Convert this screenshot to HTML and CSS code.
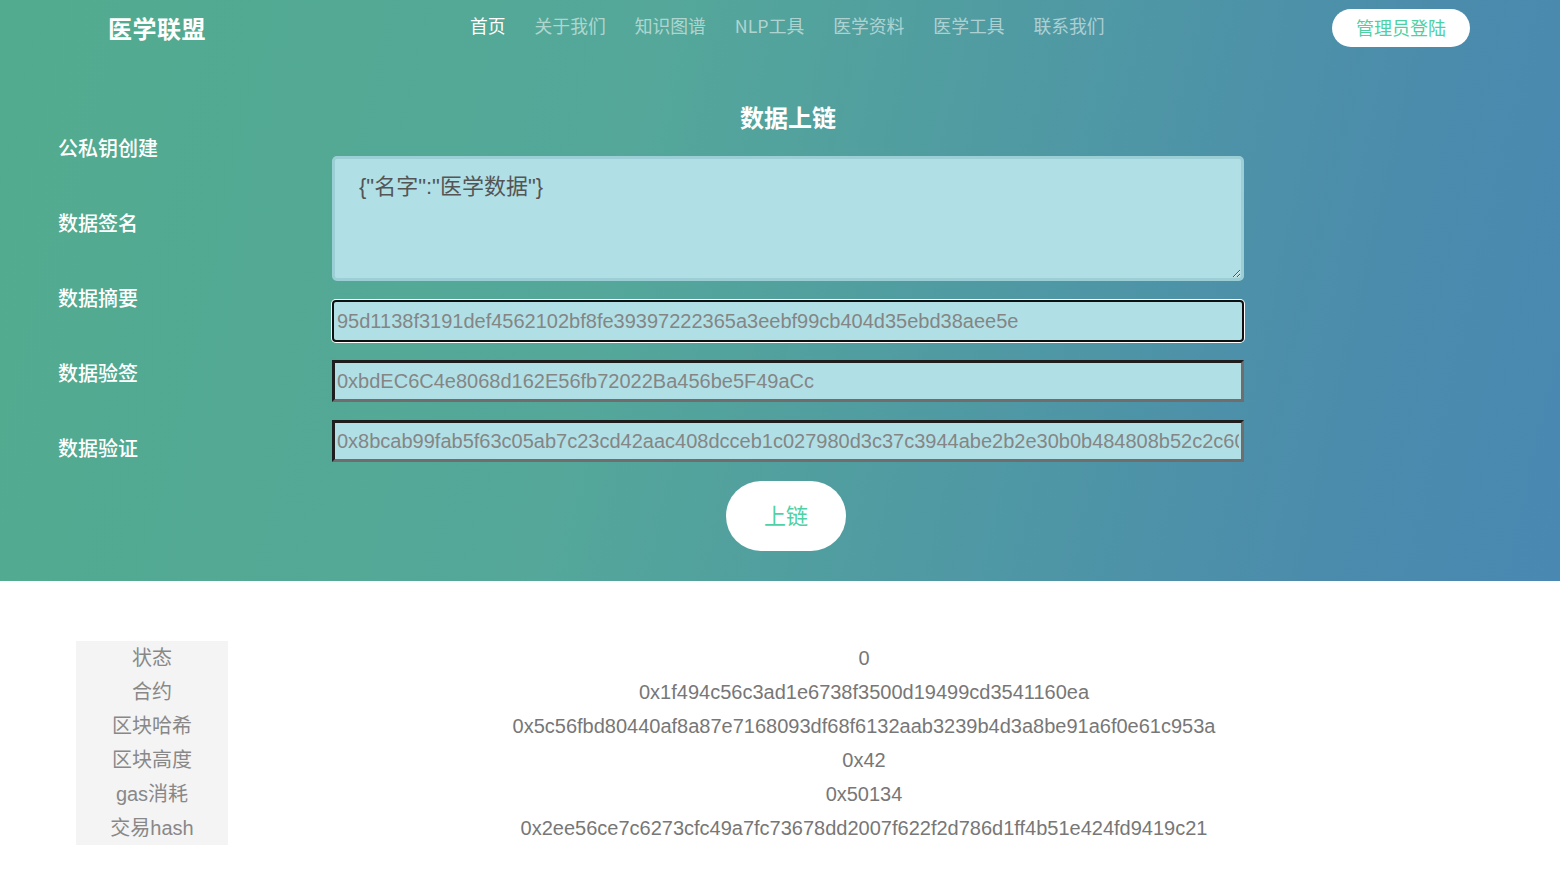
FILE: index.html
```html
<!DOCTYPE html>
<html lang="zh-CN">
<head>
<meta charset="utf-8">
<title>医学联盟 - 数据上链</title>
<link rel="stylesheet" href="styles.css">
</head>
<body>
<section class="hero">
  <header class="topbar">
    <div class="logo">医学联盟</div>
    <nav class="nav">
      <a class="nav-item active">首页</a>
      <a class="nav-item">关于我们</a>
      <a class="nav-item">知识图谱</a>
      <a class="nav-item">NLP工具</a>
      <a class="nav-item">医学资料</a>
      <a class="nav-item">医学工具</a>
      <a class="nav-item">联系我们</a>
    </nav>
    <button class="login">管理员登陆</button>
  </header>
  <div class="workspace">
    <aside class="side">
      <div class="side-item">公私钥创建</div>
      <div class="side-item">数据签名</div>
      <div class="side-item">数据摘要</div>
      <div class="side-item">数据验签</div>
      <div class="side-item">数据验证</div>
    </aside>
    <div class="panel">
      <h1 class="title">数据上链</h1>
      <textarea class="data-area">{"名字":"医学数据"}</textarea>
      <input class="field focused" type="text" value="95d1138f3191def4562102bf8fe39397222365a3eebf99cb404d35ebd38aee5e">
      <input class="field" type="text" value="0xbdEC6C4e8068d162E56fb72022Ba456be5F49aCc">
      <input class="field" type="text" value="0x8bcab99fab5f63c05ab7c23cd42aac408dcceb1c027980d3c37c3944abe2b2e30b0b484808b52c2c601c">
      <button class="submit">上链</button>
    </div>
  </div>
</section>
<section class="result">
  <div class="result-table">
    <div class="key">状态</div><div class="val">0</div>
    <div class="key">合约</div><div class="val">0x1f494c56c3ad1e6738f3500d19499cd3541160ea</div>
    <div class="key">区块哈希</div><div class="val">0x5c56fbd80440af8a87e7168093df68f6132aab3239b4d3a8be91a6f0e61c953a</div>
    <div class="key">区块高度</div><div class="val">0x42</div>
    <div class="key">gas消耗</div><div class="val">0x50134</div>
    <div class="key">交易hash</div><div class="val">0x2ee56ce7c6273cfc49a7fc73678dd2007f622f2d786d1ff4b51e424fd9419c21</div>
  </div>
</section>
</body>
</html>
```

FILE: styles.css
```css
* { box-sizing: border-box; }
html, body { margin: 0; padding: 0; }
body {
  font-family: "Liberation Sans", "Noto Sans CJK SC", Arial, sans-serif;
  background: #fff;
  height: 869px;
  overflow: hidden;
}
.hero {
  height: 581px;
  background: linear-gradient(103deg, #52ab8e 0%, #54a79a 40%, #4b8cac 85%, #4988b2 100%);
  color: #fff;
}
.topbar {
  height: 55px;
  display: grid;
  grid-template-columns: 362px 1fr auto;
  align-items: center;
  padding: 0 90px 0 108px;
}
.logo {
  font-family: "Noto Sans CJK SC", sans-serif;
  font-size: 24px;
  font-weight: 700;
  letter-spacing: 0.5px;
  line-height: 1;
}
.nav {
  display: flex;
  gap: 29px;
  font-family: "Noto Sans CJK SC", sans-serif;
  font-size: 17.8px;
}
.nav-item {
  color: rgba(255,255,255,0.55);
  text-decoration: none;
  line-height: 1;
  margin-top: -3px;
}
.nav-item.active { color: #fff; }
.login {
  width: 138px;
  height: 38px;
  border: none;
  border-radius: 19px;
  background: #fff;
  color: #4fd0a4;
  font-family: "Noto Sans CJK SC", sans-serif;
  font-size: 18px;
  line-height: 1;
  padding: 0 0 2px;
  margin-top: 1px;
}
.workspace {
  display: flex;
}
.side {
  width: 332px;
  padding: 78px 0 0 58px;
  display: flex;
  flex-direction: column;
  gap: 45px;
}
.side-item {
  font-family: "Noto Sans CJK SC", sans-serif;
  font-size: 20px;
  line-height: 30px;
  font-weight: 500;
  color: #fff;
}
.panel {
  width: 912px;
  display: flex;
  flex-direction: column;
  align-items: stretch;
}
.title {
  margin: 46px 0 23px;
  font-family: "Noto Sans CJK SC", sans-serif;
  font-size: 24px;
  line-height: 32px;
  font-weight: 700;
  text-align: center;
}
.data-area {
  height: 125px;
  margin: 0 0 19px;
  padding: 13px 24px;
  background: #b0e0e6;
  border: 3px solid #9ccfd5;
  border-radius: 5px;
  font-family: "Liberation Sans", "Noto Sans CJK SC", sans-serif;
  font-size: 22px;
  line-height: 30px;
  color: #555;
  resize: vertical;
  outline: none;
}
.field {
  height: 42px;
  margin: 0 0 18px;
  padding: 0 2px;
  background: #b0e0e6;
  border-style: solid;
  border-width: 3px;
  border-color: #1e1e1e #6e6e6e #6e6e6e #1e1e1e;
  font-family: "Liberation Sans", sans-serif;
  font-size: 20px;
  color: #858585;
  outline: none;
}
.field.focused {
  border: 2px solid #101010;
  border-radius: 4px;
  box-shadow: 0 0 0 1px #fff;
  padding: 0 3px;
}
.submit {
  align-self: center;
  width: 120px;
  height: 70px;
  margin-top: 1px;
  margin-right: 4px;
  border: none;
  border-radius: 35px;
  background: #fff;
  color: #4fd1a5;
  font-family: "Noto Sans CJK SC", sans-serif;
  font-size: 22px;
  line-height: 1;
  padding: 0 0 4px;
}
.result {
  padding: 60px 0 0 76px;
}
.result-table {
  width: 1424px;
  display: grid;
  grid-template-columns: 152px 1fr;
  grid-auto-rows: 34px;
  font-size: 20px;
}
.key {
  background: #f4f4f4;
  color: #888;
  text-align: center;
  line-height: 34px;
  font-family: "Liberation Sans", "Noto Sans CJK SC", sans-serif;
}
.val {
  color: #777;
  text-align: center;
  line-height: 34px;
}
```
